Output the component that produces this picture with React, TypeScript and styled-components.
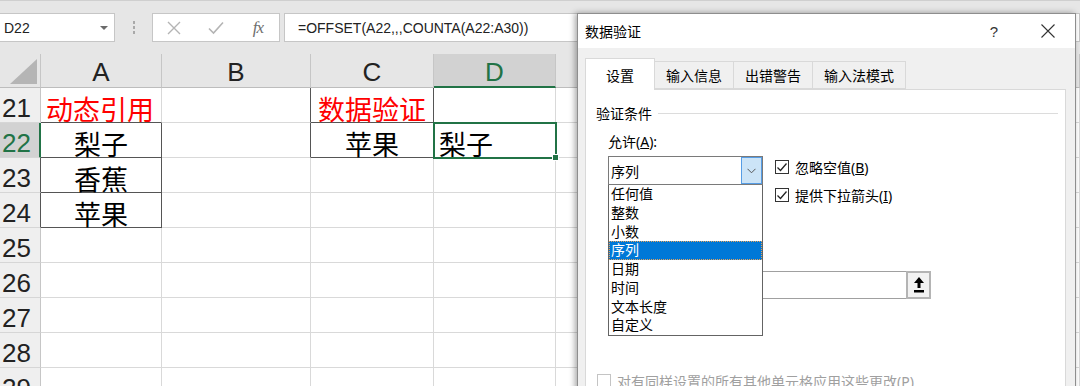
import styled, { createGlobalStyle, css } from "styled-components";

const GlobalStyle = createGlobalStyle`
  html, body { margin: 0; padding: 0; background: #fff; }
  body { font-family: "Liberation Sans", "Noto Sans CJK SC", sans-serif; }
`;

const Screen = styled.div`
  position: relative;
  width: 1080px;
  height: 386px;
  overflow: hidden;
  background: #fff;
`;

/* ---------- formula bar ---------- */

const FormulaBar = styled.div`
  height: 54px;
  box-sizing: border-box;
  background: #e6e6e6;
  border-top: 1px solid #cfcfcf;
  display: flex;
  align-items: flex-start;
  padding-top: 12px;
`;

const NameBox = styled.div`
  width: 116px;
  height: 29px;
  box-sizing: border-box;
  margin-left: -1px;
  background: #fff;
  border: 1px solid #c6c6c6;
  display: flex;
  align-items: center;
  padding-left: 4px;
  font-size: 14px;
  color: #222;
`;

const NameArrow = styled.span`
  margin-left: auto;
  margin-right: 6px;
  width: 0;
  height: 0;
  border-left: 4px solid transparent;
  border-right: 4px solid transparent;
  border-top: 4px solid #6b6b6b;
`;

const Grip = styled.div`
  width: 37px;
  height: 29px;
  display: flex;
  flex-direction: column;
  align-items: center;
  justify-content: center;
  gap: 2px;
  span {
    width: 2px;
    height: 3px;
    background: #a9a9a9;
  }
`;

const FxBox = styled.div`
  width: 128px;
  height: 29px;
  box-sizing: border-box;
  background: #fff;
  border: 1px solid #c6c6c6;
  display: grid;
  grid-template-columns: repeat(3, 1fr);
  align-items: center;
  justify-items: center;
`;

const FxGlyph = styled.span`
  font-family: "Liberation Serif", serif;
  font-style: italic;
  font-size: 17px;
  color: #6e6e6e;
  letter-spacing: -1px;
`;

const FormulaInput = styled.div`
  flex: 1;
  height: 29px;
  box-sizing: border-box;
  margin-left: 4px;
  background: #fff;
  border: 1px solid #c6c6c6;
  display: flex;
  align-items: center;
  padding-left: 13px;
  font-size: 14px;
  color: #222;
`;

/* ---------- sheet ---------- */

const Sheet = styled.div`
  display: grid;
  grid-template-columns: 41px 121px 149px 123px 122px 1fr;
  grid-template-rows: 34px repeat(9, 35px);
`;

const Corner = styled.div`
  box-sizing: border-box;
  background: #e6e6e6;
  border-right: 1px solid #c6c6c6;
  border-bottom: 1px solid #bdbdbd;
  display: flex;
  align-items: flex-end;
  justify-content: flex-end;
  padding: 0 3px 3px 0;
`;

const ColHead = styled.div<{ $active?: boolean }>`
  box-sizing: border-box;
  background: ${p => (p.$active ? "#d2d2d2" : "#e6e6e6")};
  border-right: 1px solid #c6c6c6;
  border-bottom: ${p => (p.$active ? "2px solid #217346" : "1px solid #bdbdbd")};
  display: flex;
  align-items: flex-end;
  justify-content: center;
  font-size: 26px;
  line-height: 28px;
  padding-bottom: ${p => (p.$active ? "0" : "1px")};
  color: ${p => (p.$active ? "#217346" : "#222")};
`;

const RowHead = styled.div<{ $active?: boolean; $edge?: string }>`
  box-sizing: border-box;
  background: ${p => (p.$active ? "#d2d2d2" : "#efefef")};
  border-right: ${p => (p.$active ? "2px solid #217346" : `1px solid ${p.$edge || "#c6c6c6"}`)};
  border-bottom: 1px solid #d6d6d6;
  display: flex;
  align-items: flex-end;
  padding-left: 2px;
  font-size: 26px;
  line-height: 28px;
  color: ${p => (p.$active ? "#217346" : "#222")};
`;

const Cell = styled.div<{ $r?: string; $b?: string; $left?: boolean; $red?: boolean; $sel?: boolean }>`
  position: relative;
  box-sizing: border-box;
  border-right: 1px solid ${p => p.$r || "#d9d9d9"};
  border-bottom: 1px solid ${p => p.$b || "#d9d9d9"};
  display: flex;
  align-items: center;
  justify-content: ${p => (p.$left ? "flex-start" : "center")};
  padding: 7px 0 0 ${p => (p.$left ? "5px" : "0")};
  font-family: "Noto Sans CJK SC", sans-serif;
  font-size: 27px;
  line-height: 27px;
  white-space: nowrap;
  color: ${p => (p.$red ? "#ff0000" : "#000")};
  ${p =>
    p.$sel &&
    css`
      outline: 2px solid #217346;
      outline-offset: -1px;
      z-index: 1;
      &::after {
        content: "";
        position: absolute;
        right: -4px;
        bottom: -4px;
        width: 5px;
        height: 5px;
        background: #217346;
        border: 1px solid #fff;
      }
    `}
`;

/* ---------- dialog ---------- */

const Dialog = styled.div`
  position: absolute;
  left: 577px;
  top: 13px;
  width: 499px;
  height: 420px;
  box-sizing: border-box;
  background: #f0f0f0;
  border: 1px solid #8e8e8e;
  box-shadow: -2px 0 6px rgba(0, 0, 0, 0.35);
  display: flex;
  flex-direction: column;
  font-family: "Noto Sans", "Noto Sans CJK SC", sans-serif;
  font-size: 14px;
  color: #000;
`;

const TitleBar = styled.div`
  height: 34px;
  background: #fff;
  display: flex;
  align-items: center;
  padding-left: 7px;
`;

const Title = styled.div`
  flex: 1;
`;

const HelpButton = styled.div`
  width: 30px;
  text-align: center;
  font-family: "Liberation Sans", sans-serif;
  font-size: 15px;
  color: #333;
`;

const CloseButton = styled.div`
  width: 36px;
  margin: 0 9px 0 21px;
  display: flex;
  justify-content: center;
`;

const Body = styled.div`
  flex: 1;
  display: flex;
  flex-direction: column;
  padding: 10px 9px 0 7px;
`;

const TabStrip = styled.div`
  display: flex;
  align-items: flex-end;
  height: 31px;
  position: relative;
  z-index: 1;
`;

const Tab = styled.div<{ $active?: boolean }>`
  box-sizing: border-box;
  height: ${p => (p.$active ? "32px" : "28px")};
  margin-bottom: ${p => (p.$active ? "-1px" : "0")};
  margin-left: -1px;
  padding: 0 ${p => (p.$active ? "20px" : "11px")};
  display: flex;
  align-items: center;
  background: ${p => (p.$active ? "#fff" : "#f0f0f0")};
  border: 1px solid #d9d9d9;
  border-bottom: ${p => (p.$active ? "none" : "1px solid #d9d9d9")};
  &:first-child {
    margin-left: 0;
  }
`;

const Panel = styled.div`
  flex: 1;
  background: #fff;
  border: 1px solid #d9d9d9;
  padding-top: 13px;
`;

const GroupHeader = styled.div`
  display: flex;
  align-items: center;
  gap: 6px;
  height: 20px;
  padding: 0 7px 0 10px;
`;

const GroupLine = styled.div`
  flex: 1;
  height: 1px;
  background: #dcdcdc;
`;

const Fields = styled.div`
  padding-left: 22px;
`;

const FieldLabel = styled.div`
  height: 20px;
  line-height: 20px;
  margin-top: 9px;
`;

const ComboRow = styled.div`
  display: flex;
  align-items: flex-start;
  margin-top: 4px;
`;

const ComboWrap = styled.div`
  position: relative;
  width: 155px;
  z-index: 2;
`;

const Combo = styled.div`
  height: 29px;
  box-sizing: border-box;
  border: 1px solid #7a7a7a;
  display: flex;
  align-items: stretch;
  background: #fff;
`;

const ComboValue = styled.div`
  flex: 1;
  display: flex;
  align-items: center;
  padding-left: 2px;
`;

const ComboButton = styled.div`
  width: 19px;
  background: #cce4f7;
  border: 1px solid #569de5;
  display: flex;
  align-items: center;
  justify-content: center;
`;

const DropList = styled.div`
  position: absolute;
  top: 100%;
  left: 0;
  width: 100%;
  box-sizing: border-box;
  background: #fff;
  border: 1px solid #646464;
  border-top: none;
`;

const ListItem = styled.div<{ $active?: boolean }>`
  height: 18.75px;
  line-height: 18.75px;
  box-sizing: border-box;
  padding-left: 2px;
  background: ${p => (p.$active ? "#0078d7" : "transparent")};
  color: ${p => (p.$active ? "#fff" : "#000")};
  outline: ${p => (p.$active ? "1px dotted #e8a25a" : "none")};
  outline-offset: -1px;
`;

const CheckCol = styled.div`
  margin-left: 12px;
  padding-top: 1px;
  display: flex;
  flex-direction: column;
  gap: 8px;
`;

const CheckRow = styled.label<{ $disabled?: boolean }>`
  display: flex;
  align-items: center;
  gap: 6px;
  height: 20px;
  white-space: nowrap;
  color: ${p => (p.$disabled ? "#a0a0a0" : "#000")};
`;

const Box = styled.span<{ $disabled?: boolean }>`
  width: 14px;
  height: 14px;
  box-sizing: border-box;
  border: 1px solid ${p => (p.$disabled ? "#c4c4c4" : "#333")};
  background: #fff;
  display: inline-flex;
  align-items: center;
  justify-content: center;
  flex: none;
`;

const SourceRow = styled.div`
  display: flex;
  margin-top: 66px;
`;

const SourceInput = styled.div`
  width: 298px;
  height: 28px;
  box-sizing: border-box;
  border: 1px solid #a0a0a0;
  border-right: none;
  background: #fff;
`;

const RefButton = styled.div`
  width: 25px;
  height: 28px;
  box-sizing: border-box;
  border: 2px solid #b4b4b4;
  background: #f2f2f2;
  display: flex;
  align-items: center;
  justify-content: center;
`;

const ApplyRow = styled.div`
  margin-top: 72px;
  padding-left: 11px;
`;

const options = ["任何值", "整数", "小数", "序列", "日期", "时间", "文本长度", "自定义"];

function Check({ on, disabled }: { on?: boolean; disabled?: boolean }) {
  return (
    <Box $disabled={disabled}>
      {on && (
        <svg width="12" height="12" viewBox="0 0 12 12">
          <polyline points="1.5,6.5 4.5,9.5 10.5,2.5" fill="none" stroke="#222" strokeWidth="1.3" />
        </svg>
      )}
    </Box>
  );
}

export default function App() {
  const rows = [21, 22, 23, 24, 25, 26, 27, 28, 29];
  const dark = "#555";

  return (
    <Screen>
      <GlobalStyle />
      <FormulaBar>
        <NameBox>
          D22
          <NameArrow />
        </NameBox>
        <Grip>
          <span />
          <span />
          <span />
        </Grip>
        <FxBox>
          <svg width="14" height="14" viewBox="0 0 14 14">
            <path d="M1 1L13 13M13 1L1 13" stroke="#b4b4b4" strokeWidth="1.4" />
          </svg>
          <svg width="16" height="14" viewBox="0 0 16 14">
            <path d="M1 7.5L5.5 12L15 1.5" fill="none" stroke="#b4b4b4" strokeWidth="1.6" />
          </svg>
          <FxGlyph>fx</FxGlyph>
        </FxBox>
        <FormulaInput>=OFFSET(A22,,,COUNTA(A22:A30))</FormulaInput>
      </FormulaBar>

      <Sheet>
        <Corner>
          <svg width="27" height="25" viewBox="0 0 27 25">
            <polygon points="27,0 27,25 0,25" fill="#b5b5b5" />
          </svg>
        </Corner>
        <ColHead>A</ColHead>
        <ColHead>B</ColHead>
        <ColHead>C</ColHead>
        <ColHead $active>D</ColHead>
        <ColHead />

        {rows.map(r => {
          const inList = r >= 22 && r <= 24;
          return [
            <RowHead key={`h${r}`} $active={r === 22} $edge={inList ? dark : undefined}>
              {r}
            </RowHead>,
            <Cell
              key={`a${r}`}
              $red={r === 21}
              $r={inList ? dark : undefined}
              $b={r >= 21 && r <= 24 ? dark : undefined}
              $left={r === 21}
            >
              {r === 21 ? "动态引用" : r === 22 ? "梨子" : r === 23 ? "香蕉" : r === 24 ? "苹果" : ""}
            </Cell>,
            <Cell key={`b${r}`} $r={r === 21 || r === 22 ? dark : undefined} />,
            <Cell
              key={`c${r}`}
              $red={r === 21}
              $r={r === 21 || r === 22 ? dark : undefined}
              $b={r === 21 || r === 22 ? dark : undefined}
            >
              {r === 21 ? "数据验证" : r === 22 ? "苹果" : ""}
            </Cell>,
            <Cell key={`d${r}`} $left $sel={r === 22} $b={r === 22 ? dark : undefined}>
              {r === 22 ? "梨子" : ""}
            </Cell>,
            <Cell key={`e${r}`} />,
          ];
        })}
      </Sheet>

      <Dialog>
        <TitleBar>
          <Title>数据验证</Title>
          <HelpButton>?</HelpButton>
          <CloseButton>
            <svg width="14" height="14" viewBox="0 0 14 14">
              <path d="M0.5 0.5L13.5 13.5M13.5 0.5L0.5 13.5" stroke="#333" strokeWidth="1.1" />
            </svg>
          </CloseButton>
        </TitleBar>
        <Body>
          <TabStrip>
            <Tab $active>设置</Tab>
            <Tab>输入信息</Tab>
            <Tab>出错警告</Tab>
            <Tab>输入法模式</Tab>
          </TabStrip>
          <Panel>
            <GroupHeader>
              验证条件
              <GroupLine />
            </GroupHeader>
            <Fields>
              <FieldLabel>
                允许(<u>A</u>):
              </FieldLabel>
              <ComboRow>
                <ComboWrap>
                  <Combo>
                    <ComboValue>序列</ComboValue>
                    <ComboButton>
                      <svg width="9" height="6" viewBox="0 0 9 6">
                        <polyline points="0.5,0.8 4.5,4.8 8.5,0.8" fill="none" stroke="#555" strokeWidth="1" />
                      </svg>
                    </ComboButton>
                  </Combo>
                  <DropList>
                    {options.map(o => (
                      <ListItem key={o} $active={o === "序列"}>
                        {o}
                      </ListItem>
                    ))}
                  </DropList>
                </ComboWrap>
                <CheckCol>
                  <CheckRow>
                    <Check on />
                    <span>
                      忽略空值(<u>B</u>)
                    </span>
                  </CheckRow>
                  <CheckRow>
                    <Check on />
                    <span>
                      提供下拉箭头(<u>I</u>)
                    </span>
                  </CheckRow>
                </CheckCol>
              </ComboRow>
              <SourceRow>
                <SourceInput />
                <RefButton>
                  <svg width="12" height="18" viewBox="0 0 12 18">
                    <polygon points="6,1 11,7 7.5,7 7.5,12 4.5,12 4.5,7 1,7" fill="#000" />
                    <rect x="1" y="14" width="10" height="2.5" fill="#000" />
                  </svg>
                </RefButton>
              </SourceRow>
            </Fields>
            <ApplyRow>
              <CheckRow $disabled>
                <Check disabled />
                <span>
                  对有同样设置的所有其他单元格应用这些更改(<u>P</u>)
                </span>
              </CheckRow>
            </ApplyRow>
          </Panel>
        </Body>
      </Dialog>
    </Screen>
  );
}
